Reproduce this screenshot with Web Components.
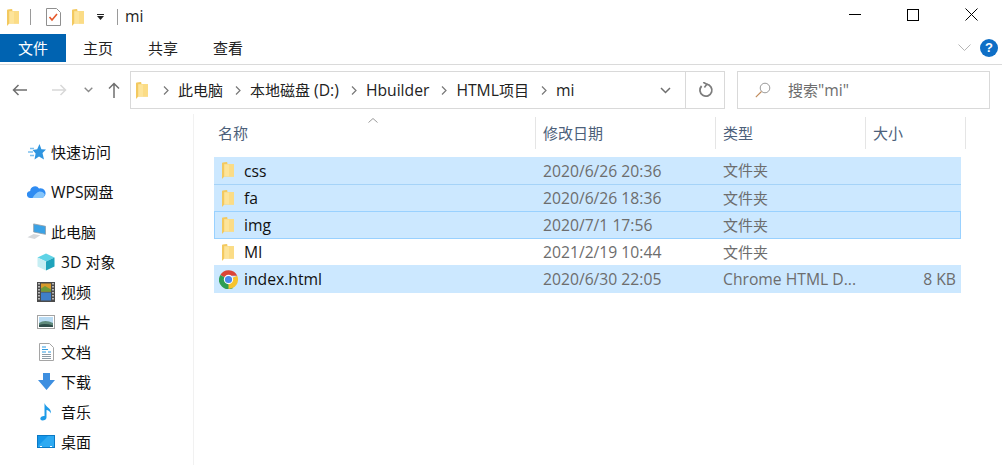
<!DOCTYPE html>
<html>
<head>
<meta charset="utf-8">
<title>mi</title>
<style>
  html, body { margin: 0; height: 100%; background: #fff; overflow: hidden; }
  body {
    font-family: "Open Sans", "Noto Sans CJK SC", sans-serif;
    font-size: 15px;
    color: #000;
  }
  explorer-window { width: 1002px; height: 465px; }
  .lat { font-size: 15.7px; }
</style>
</head>
<body>
<explorer-window>
  <title-bar slot="title">mi</title-bar>
  <ribbon-tabs slot="ribbon"></ribbon-tabs>
  <address-bar slot="address"></address-bar>
  <nav-pane slot="nav">
    <nav-item icon="star">快速访问</nav-item>
    <nav-item icon="cloud" nudge><span class="lat">WPS</span>网盘</nav-item>
    <nav-item icon="pc">此电脑</nav-item>
    <nav-item icon="cube" sub nudge><span class="lat">3D </span>对象</nav-item>
    <nav-item icon="film" sub>视频</nav-item>
    <nav-item icon="pic" sub>图片</nav-item>
    <nav-item icon="doc" sub>文档</nav-item>
    <nav-item icon="down" sub>下载</nav-item>
    <nav-item icon="music" sub>音乐</nav-item>
    <nav-item icon="desk" sub>桌面</nav-item>
  </nav-pane>
  <file-list slot="list">
    <file-row selected name="css" date="2020/6/26 20:36" type="文件夹"></file-row>
    <file-row selected name="fa" date="2020/6/26 18:36" type="文件夹"></file-row>
    <file-row selected focus name="img" date="2020/7/1 17:56" type="文件夹"></file-row>
    <file-row name="MI" date="2021/2/19 10:44" type="文件夹"></file-row>
    <file-row selected icon="chrome" name="index.html" date="2020/6/30 22:05" type="Chrome HTML D..." size="8 KB"></file-row>
  </file-list>
</explorer-window>

<script>
// shared icons, drawn to match the explorer ones
const FOLDER = `<svg width="12" height="17" viewBox="0 0 12 17">
  <path d="M0 1.5 Q0 .8 .8 .6 L4.5 0 Q5.4 0 5.4 1 V2 H12 V14.5 H2.2 L.6 16.6 Q0 16.8 0 16 Z" fill="#f3c95f"/>
  <path d="M2.2 2.2 H12 V14.5 H2.2 Z" fill="#fde49a"/>
  <path d="M7 2.2 H12 V14.5 H7 Z" fill="#fbdc86"/>
</svg>`;

const ICONS = {
  star: `<svg width="18" height="16" viewBox="0 0 18 16"><path d="M11.5 0 L13.4 5.2 L18 5.6 L14.5 9 L16 15.5 L11 12.6 L6.5 15.5 L7.6 9.4 L4.6 6 L9.2 5.2 Z" fill="#2f95e0"/><path d="M2 4.5H6M0 8H5M2 11.5H6" stroke="#7cc0ee" stroke-width="1.3"/></svg>`,
  cloud: `<svg width="19" height="13" viewBox="0 0 19 13"><path d="M3.6 13 A3.5 3.5 0 0 1 3.2 6 A4.8 4.8 0 0 1 12 3.4 A4.9 4.9 0 0 1 15 13 Z" fill="#2f8cf2"/><path d="M5.5 13 Q8.5 7.5 12.5 6.5 Q16.5 6.5 17.8 9.5 Q17 13 15 13 Z" fill="#86c6fb"/></svg>`,
  pc: `<svg width="20" height="17" viewBox="0 0 20 17"><path d="M7 .5 L19.5 3 V11.5 L7 9 Z" fill="#3aa2e6" stroke="#8f9aa3" stroke-width=".8"/><path d="M0.5 14.5 L7 11 L14 12.5 L8 16.5 Z" fill="#d5d8db"/></svg>`,
  cube: `<svg width="18" height="18" viewBox="0 0 18 18"><path d="M9 0.5 L17.5 4.5 L9 8.5 L0.5 4.5 Z" fill="#5fd3e6"/><path d="M0.5 4.5 L9 8.5 V17.5 L0.5 13.5 Z" fill="#c6eef3"/><path d="M17.5 4.5 L9 8.5 V17.5 L17.5 13.5 Z" fill="#1fa3bb"/></svg>`,
  film: `<svg width="18" height="20" viewBox="0 0 18 20"><rect width="18" height="20" fill="#4b4b4b"/><rect x="4" y="1.5" width="10" height="8" fill="#d99a2b"/><rect x="4" y="10.5" width="10" height="8" fill="#3f7fc9"/><path d="M4 6.5 L8 4 L14 7.5 V9.5 H4 Z" fill="#6d9b3a"/><path d="M2 1V19M16 1V19" stroke="#ddd" stroke-width="1.5" stroke-dasharray="1.5 1.5"/></svg>`,
  pic: `<svg width="18" height="14" viewBox="0 0 18 14"><rect x=".5" y=".5" width="17" height="13" fill="#fff" stroke="#a3a3a3"/><rect x="2" y="2" width="14" height="10" fill="#b9dbf3"/><path d="M2 8 Q8 4 16 8 V12 H2 Z" fill="#5f8a7c"/><path d="M2 10 Q8 8 16 10.5 V12 H2 Z" fill="#2f4d4a"/></svg>`,
  doc: `<svg width="15" height="18" viewBox="0 0 15 18"><path d="M.5 .5 H10.5 L14.5 4.5 V17.5 H.5 Z" fill="#fff" stroke="#a5a5a5"/><path d="M3 11.5H12M3 13.5H12M3 15.5H12" stroke="#8b9aa6"/><path d="M3 4H7M3 6.5H9M3 9H7M9 9H12" stroke="#2f9ae0"/></svg>`,
  down: `<svg width="17" height="17" viewBox="0 0 17 17"><path d="M5 0 H12 V7 H17 L8.5 17 L0 7 H5 Z" fill="#3e8fe0"/></svg>`,
  music: `<svg width="12" height="18" viewBox="0 0 12 18"><path d="M4.5 0 C5.5 4 11.5 5 11 10.5 C10 8 8 7.2 6.5 7 V14.5 C6.5 16.5 4.5 17.5 2.6 17.5 C.8 17.5 0 16 .4 15 C.9 13.6 3 12.6 4.5 13 Z" fill="#1e9be8"/></svg>`,
  desk: `<svg width="18" height="13" viewBox="0 0 18 13"><rect x=".5" y=".5" width="17" height="12" fill="#1597ea" stroke="#0b79c4"/><path d="M1 11 L11 1 H17 V12 H1 Z" fill="#2eaaf2"/><path d="M3 11.5H5M13 11.5H15" stroke="#fff"/></svg>`,
  chrome: `<svg width="19" height="19" viewBox="0 0 18 18">
    <path d="M9 9 L1.2 4.8 A9 9 0 0 1 17.3 5.5 H9 Z" fill="#db4437"/>
    <path d="M9 9 L13.5 17 A9 9 0 0 1 1.2 4.8 Z" fill="#2e9e55"/>
    <path d="M9 9 L17.3 5.5 A9 9 0 0 1 9 18 Z" fill="#f6c42f"/>
    <circle cx="9" cy="9" r="4.4" fill="#fff"/><circle cx="9" cy="9" r="3.4" fill="#4a88ee"/></svg>`
};

class ExplorerWindow extends HTMLElement {
  constructor() {
    super();
    this.attachShadow({mode: 'open'});
    this.shadowRoot.innerHTML = `
      <style>
        :host { display: flex; flex-direction: column; background: #fff; }
        .main { flex: 1; display: flex; min-height: 0; }
      </style>
      <slot name="title"></slot>
      <slot name="ribbon"></slot>
      <slot name="address"></slot>
      <div class="main"><slot name="nav"></slot><slot name="list"></slot></div>`;
  }
}

class TitleBar extends HTMLElement {
  constructor() {
    super();
    this.attachShadow({mode: 'open'});
    this.shadowRoot.innerHTML = `
      <style>
        :host { display: flex; align-items: center; height: 34px; padding-left: 7px; font-size: 15.7px; color: #222; }
        .sep { width: 1px; height: 16px; background: #9a9a9a; }
        svg, .sep { flex: none; }
        .sep.a { margin: 0 15px 0 11px; }
        .sep.b { margin: 0 7px 0 13px; }
        .doc { margin-right: 11px; }
        .drop { margin-left: 13px; }
        .f { display: flex; }
        .t { padding-bottom: 2px; }
        .btns { margin-left: auto; display: flex; margin-top: -5px; margin-right: 2px; }
        .btns div { width: 58px; height: 30px; display: flex; align-items: center; justify-content: center; }
      </style>
      <span class="f">${FOLDER}</span>
      <span class="sep a"></span>
      <svg class="doc" width="15" height="18" viewBox="0 0 15 18"><path d="M.5 .5H10.5L14.5 4.5V17.5H.5Z" fill="#fff" stroke="#8f8f8f"/><path d="M3.5 9L6 12L11 6" fill="none" stroke="#e5592b" stroke-width="1.6"/></svg>
      <span class="f">${FOLDER}</span>
      <svg class="drop" width="7" height="6" viewBox="0 0 7 6"><path d="M0 0H7V1H0Z M0 2H7L3.5 6Z" fill="#222"/></svg>
      <span class="sep b"></span>
      <span class="t"><slot></slot></span>
      <span class="btns">
        <div><svg width="12" height="1"><rect width="12" height="1" fill="#000"/></svg></div>
        <div><svg width="12" height="12"><rect x=".5" y=".5" width="11" height="11" fill="none" stroke="#000"/></svg></div>
        <div><svg width="13" height="13"><path d="M.5 .5L12.5 12.5M12.5 .5L.5 12.5" stroke="#000"/></svg></div>
      </span>`;
  }
}

class RibbonTabs extends HTMLElement {
  constructor() {
    super();
    this.attachShadow({mode: 'open'});
    this.shadowRoot.innerHTML = `
      <style>
        :host { display: flex; align-items: center; gap: 35px; height: 31px; box-sizing: border-box; padding-bottom: 3px; border-bottom: 1px solid #dadada; font-size: 15px; color: #222; }
        .file { width: 66px; height: 28px; background: #0063b1; color: #fff; display: flex; align-items: center; justify-content: center; margin-right: -18px; }
        .end { margin-left: auto; display: flex; align-items: center; gap: 9px; padding-right: 4px; }
        .help { width: 18px; height: 18px; border-radius: 50%; background: #0f6fc6; color: #fff; font: bold 13px/18px "Liberation Sans", sans-serif; text-align: center; }
      </style>
      <div class="file">文件</div>
      <div>主页</div>
      <div>共享</div>
      <div>查看</div>
      <div class="end">
        <svg width="13" height="7" viewBox="0 0 13 7"><path d="M.5 .5L6.5 6.5L12.5 .5" fill="none" stroke="#b5b5b5"/></svg>
        <div class="help">?</div>
      </div>`;
  }
}

class AddressBar extends HTMLElement {
  constructor() {
    super();
    const crumb = t => `<svg class="chev" width="6" height="9" viewBox="0 0 6 9"><path d="M1 .5L5 4.5L1 8.5" fill="none" stroke="#777" stroke-width="1.2"/></svg><span>${t}</span>`;
    this.attachShadow({mode: 'open'});
    this.shadowRoot.innerHTML = `
      <style>
        :host { display: flex; align-items: center; height: 38px; margin-top: 6px; margin-bottom: 5px; padding-right: 12px; font-size: 15.7px; color: #222; }
        .zh { font-size: 15px; }
        .nav { width: 130px; flex: none; display: flex; align-items: center; padding-left: 12px; box-sizing: border-box; }
        .nav svg { flex: none; }
        .box { height: 38px; box-sizing: border-box; border: 1px solid #d9d9d9; display: flex; align-items: center; }
        .path { width: 595px; flex: none; padding-left: 5px; }
        .path > svg:first-child { margin-right: 3px; }
        .path .chev { margin: 0 9px 0 12px; }
        .path .drop { margin-left: auto; margin-right: 14px; }
        .refresh { width: 39px; height: 36px; border-left: 1px solid #d9d9d9; display: flex; align-items: center; justify-content: center; padding-left: 1px; box-sizing: border-box; }
        .search { flex: 1; margin-left: 12px; color: #6d6d6d; padding-left: 17px; gap: 17px; }
      </style>
      <div class="nav">
        <svg width="16" height="12" viewBox="0 0 16 12"><path d="M15 6H1.5M6.5 1L1.5 6L6.5 11" fill="none" stroke="#6f6f6f" stroke-width="1.5"/></svg>
        <svg style="margin-left:23px" width="16" height="12" viewBox="0 0 16 12"><path d="M1 6H14.5M9.5 1L14.5 6L9.5 11" fill="none" stroke="#d8d8d8" stroke-width="1.5"/></svg>
        <svg style="margin-left:17px" width="9" height="6" viewBox="0 0 9 6"><path d="M.7 .7L4.5 4.5L8.3 .7" fill="none" stroke="#8a8a8a" stroke-width="1.4"/></svg>
        <svg style="margin-left:15px" width="12" height="16" viewBox="0 0 12 16"><path d="M6 16V1.5M1 6.5L6 1.5L11 6.5" fill="none" stroke="#6f6f6f" stroke-width="1.5"/></svg>
      </div>
      <div class="box path">
        ${FOLDER}
        ${crumb('<span class="zh">此电脑</span>')}${crumb('<span class="zh">本地磁盘</span> (D:)')}${crumb('Hbuilder')}${crumb('HTML<span class="zh">项目</span>')}${crumb('mi')}
        <svg class="drop" width="11" height="7" viewBox="0 0 11 7"><path d="M1 1L5.5 5.5L10 1" fill="none" stroke="#6f6f6f" stroke-width="1.5"/></svg>
        <div class="refresh"><svg width="16" height="16" viewBox="0 0 16 16"><path d="M8.5 2.2A6 6 0 1 1 3.6 4" fill="none" stroke="#7d7d7d" stroke-width="1.8"/><path d="M5.2 .2L8.8 2.2L6.4 5.4" fill="none" stroke="#7d7d7d" stroke-width="1.6"/></svg></div>
      </div>
      <div class="box search">
        <svg width="16" height="16" viewBox="0 0 16 16"><circle cx="10" cy="6" r="4.8" fill="none" stroke="#9a9a9a"/><path d="M6.5 9.5L.8 15.2" stroke="#c08a5a" stroke-width="1.1"/></svg>
        <span><span class="zh">搜索</span>"mi"</span>
      </div>`;
  }
}

class NavPane extends HTMLElement {
  constructor() {
    super();
    this.attachShadow({mode: 'open'});
    this.shadowRoot.innerHTML = `
      <style>
        :host { display: block; width: 194px; flex: none; box-sizing: border-box; border-right: 1px solid #f1f1f1; padding-top: 22px; }
      </style>
      <slot></slot>`;
  }
}

class NavItem extends HTMLElement {
  constructor() {
    super();
    this.attachShadow({mode: 'open'});
  }
  connectedCallback() {
    const sub = this.hasAttribute('sub');
    const icon = ICONS[this.getAttribute('icon')];
    this.shadowRoot.innerHTML = `
      <style>
        :host { display: flex; align-items: center; height: 30px; font-size: 15px; color: #111; padding-left: ${sub ? 37 : 27}px; }
        :host(:not([sub])) { margin-bottom: 10px; }
        :host([icon="pc"]) { margin-bottom: 0; }
        :host([nudge]) .t { padding-top: 2px; }
        .i { width: ${sub ? 18 : 19}px; margin-right: ${sub ? 6 : 5}px; flex: none; display: flex; align-items: center; justify-content: center; padding-top: 1px; }
      </style>
      <span class="i">${icon}</span><span class="t"><slot></slot></span>`;
  }
}

class FileList extends HTMLElement {
  constructor() {
    super();
    this.attachShadow({mode: 'open'});
    this.shadowRoot.innerHTML = `
      <style>
        :host { display: block; flex: 1; padding-left: 20px; position: relative; }
        .head { display: flex; height: 32px; margin-top: 3px; font-size: 15px; color: #4c607a; margin-bottom: 8px; }
        .head div { box-sizing: border-box; padding-left: 7px; padding-bottom: 2px; border-right: 1px solid #e5e5e5; display: flex; align-items: center; }
        .sort { position: absolute; left: 174px; top: 4px; }
        .rows { width: 747px; }
      </style>
      <svg class="sort" width="10" height="5" viewBox="0 0 10 5"><path d="M.5 4.5L5 .5L9.5 4.5" fill="none" stroke="#9a9a9a"/></svg>
      <div class="head">
        <div style="width:322px;padding-left:4px">名称</div>
        <div style="width:180px">修改日期</div>
        <div style="width:150px">类型</div>
        <div style="width:100px">大小</div>
      </div>
      <div class="rows"><slot></slot></div>`;
  }
}

class FileRow extends HTMLElement {
  constructor() {
    super();
    this.attachShadow({mode: 'open'});
  }
  connectedCallback() {
    const a = n => this.getAttribute(n) || '';
    const icon = a('icon') === 'chrome' ? ICONS.chrome : FOLDER;
    this.shadowRoot.innerHTML = `
      <style>
        :host { display: flex; align-items: center; height: 26px; box-sizing: border-box; font-size: 15.7px; color: #6d6d6d; }
        :host([selected]) { background: #cce8ff; }
        :host(:first-child) { height: 28px; border-bottom: 1px solid #a5d3f8; }
        :host([focus]) { border: 1px solid #99d1ff; height: 28px; }
        :host(:last-child) { height: 28px; }
        :host([focus]) .i { margin-left: -1px; }
        .i { width: 30px; flex: none; display: flex; justify-content: center; padding-right: 2px; box-sizing: border-box; }
        .name { width: 299px; color: #111; }
        .date { width: 180px; }
        .type { width: 150px; }
        .size { flex: 1; text-align: right; padding-right: 5px; }
        .type, .size { white-space: nowrap; }
        .zh { font-size: 15px; padding-bottom: 2px; }
      </style>
      <span class="i">${icon}</span>
      <span class="name">${a('name')}</span>
      <span class="date">${a('date')}</span>
      <span class="type${a('size') ? '' : ' zh'}">${a('type')}</span>
      <span class="size">${a('size')}</span>`;
  }
}

customElements.define('explorer-window', ExplorerWindow);
customElements.define('title-bar', TitleBar);
customElements.define('ribbon-tabs', RibbonTabs);
customElements.define('address-bar', AddressBar);
customElements.define('nav-pane', NavPane);
customElements.define('nav-item', NavItem);
customElements.define('file-list', FileList);
customElements.define('file-row', FileRow);
</script>
</body>
</html>
